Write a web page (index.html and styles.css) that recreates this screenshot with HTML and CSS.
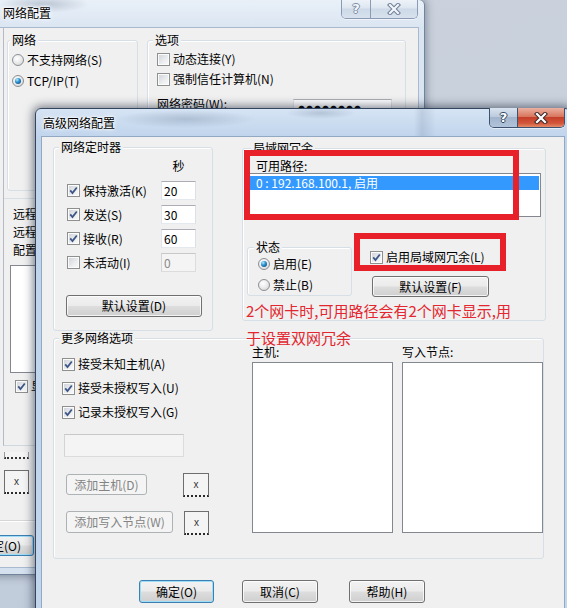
FILE: index.html
```html
<!DOCTYPE html>
<html lang="zh-CN">
<head>
<meta charset="utf-8">
<title>高级网络配置</title>
<link rel="stylesheet" href="styles.css">
</head>
<body>

<div class="window back">
  <div class="titlebar">
    <span class="title">网络配置</span>
    <div class="caps inactive">
      <span class="cap help">?</span>
      <span class="cap close"><svg viewBox="0 0 14 12" width="14" height="12"><path class="xo" d="M3 2 11 10M11 2 3 10"/><path class="xi" d="M3 2 11 10M11 2 3 10"/></svg></span>
    </div>
  </div>
  <div class="client">
    <div class="page">
      <div class="back-groups">
        <div class="group g-net">
          <div class="glabel">网络</div>
          <div class="opt r1"><span class="rb"></span>不支持网络(S)</div>
          <div class="opt r2"><span class="rb on"></span>TCP/IP(T)</div>
        </div>
        <div class="group g-opts">
          <div class="glabel">选项</div>
          <div class="opt o1"><span class="cb"></span>动态连接(Y)</div>
          <div class="opt o2"><span class="cb"></span>强制信任计算机(N)</div>
          <div class="pw-row"><span class="pw-label">网络密码(W):</span><span class="tb pw">●●●●●●●●</span></div>
        </div>
      </div>
      <div class="remote">
        <div class="remote-lines">
          <div>远程主机名称:</div>
          <div>远程节点地址:</div>
          <div>配置文件:</div>
        </div>
        <div class="list remote-list"></div>
        <div class="opt"><span class="cb on"><svg viewBox="0 0 9 9"><path d="M1.2 4.4 3.5 7 7.8 1.5"/></svg></span>显示全部</div>
      </div>
    </div>
    <div class="stub"></div>
    <div class="xbtn back-x">x</div>
    <div class="sep"></div>
    <div class="btn def back-ok">确定(O)</div>
  </div>
</div>

<div class="window front">
  <div class="titlebar">
    <span class="title">高级网络配置</span>
    <div class="caps">
      <span class="cap help">?</span>
      <span class="cap close"><svg viewBox="0 0 14 12" width="14" height="12"><path class="xo" d="M3 2 11 10M11 2 3 10"/><path class="xi" d="M3 2 11 10M11 2 3 10"/></svg></span>
    </div>
  </div>
  <div class="client">
    <div class="row1">
      <div class="group g-timer">
        <div class="glabel">网络定时器</div>
        <div class="timer-grid">
          <span></span><span class="sec">秒</span>
          <div class="opt"><span class="cb on"><svg viewBox="0 0 9 9"><path d="M1.2 4.4 3.5 7 7.8 1.5"/></svg></span>保持激活(K)</div><span class="tb">20</span>
          <div class="opt"><span class="cb on"><svg viewBox="0 0 9 9"><path d="M1.2 4.4 3.5 7 7.8 1.5"/></svg></span>发送(S)</div><span class="tb">30</span>
          <div class="opt"><span class="cb on"><svg viewBox="0 0 9 9"><path d="M1.2 4.4 3.5 7 7.8 1.5"/></svg></span>接收(R)</div><span class="tb">60</span>
          <div class="opt"><span class="cb"></span>未活动(I)</div><span class="tb dis">0</span>
        </div>
        <div class="btn btn-d">默认设置(D)</div>
      </div>
      <div class="group g-lan">
        <div class="glabel">局域网冗余</div>
        <div class="paths-label">可用路径:</div>
        <div class="list paths"><div class="item sel">0 : 192.168.100.1, 启用</div></div>
        <div class="lan-row">
          <div class="group g-state">
            <div class="glabel">状态</div>
            <div class="opt s1"><span class="rb on"></span>启用(E)</div>
            <div class="opt s2"><span class="rb"></span>禁止(B)</div>
          </div>
          <div class="lan-right">
            <div class="opt"><span class="cb on"><svg viewBox="0 0 9 9"><path d="M1.2 4.4 3.5 7 7.8 1.5"/></svg></span>启用局域网冗余(L)</div>
            <div class="btn btn-f">默认设置(F)</div>
          </div>
        </div>
      </div>
    </div>

    <div class="group g-more">
      <div class="glabel">更多网络选项</div>
      <div class="more-body">
        <div class="more-left">
          <div class="opt m1"><span class="cb on"><svg viewBox="0 0 9 9"><path d="M1.2 4.4 3.5 7 7.8 1.5"/></svg></span>接受未知主机(A)</div>
          <div class="opt"><span class="cb on"><svg viewBox="0 0 9 9"><path d="M1.2 4.4 3.5 7 7.8 1.5"/></svg></span>接受未授权写入(U)</div>
          <div class="opt"><span class="cb on"><svg viewBox="0 0 9 9"><path d="M1.2 4.4 3.5 7 7.8 1.5"/></svg></span>记录未授权写入(G)</div>
          <div class="tb dis wide"></div>
          <div class="brow brow1">
            <div class="btn dis btn-host">添加主机(D)</div>
            <div class="xbtn x1">x</div>
          </div>
          <div class="brow brow2">
            <div class="btn dis btn-node">添加写入节点(W)</div>
            <div class="xbtn x2">x</div>
          </div>
        </div>
        <div class="more-col">
          <div>主机:</div>
          <div class="list hosts"></div>
        </div>
        <div class="more-col col2">
          <div>写入节点:</div>
          <div class="list hosts"></div>
        </div>
      </div>
    </div>

    <div class="dlg-btns">
      <div class="btn def btn-ok">确定(O)</div>
      <div class="btn btn-cancel">取消(C)</div>
      <div class="btn btn-help">帮助(H)</div>
    </div>
  </div>
</div>

<div class="mark mark-paths"></div>
<div class="mark mark-redund"></div>
<p class="note">2个网卡时,可用路径会有2个网卡显示,用<br>于设置双网冗余</p>

</body>
</html>
```

FILE: styles.css
```css
* { box-sizing: border-box; }
html, body { margin: 0; padding: 0; }
body {
  width: 567px;
  height: 608px;
  overflow: hidden;
  position: relative;
  background: linear-gradient(170deg, #cbd2dd 0%, #c6cfdb 60%, #bfcbdb 100%);
  font-family: "Noto Sans CJK SC", "Noto Sans", sans-serif;
  font-size: 12px;
  line-height: 14px;
  color: #000;
}

/* ---------- windows ---------- */
.window {
  position: absolute;
  display: flex;
  flex-direction: column;
  border: 1px solid #4a5c76;
  border-radius: 6px 6px 0 0;
}
.back {
  left: -67px;
  top: -1px;
  width: 492px;
  height: 576px;
  border-color: #72839c;
  background:
    radial-gradient(ellipse 45px 9px at 110px 4px, rgba(70, 90, 120, .28), transparent),
    linear-gradient(180deg, #e9f0f8 0, #dae5f2 28px, #d5e1ef 100%);
  box-shadow: 0 0 8px 1px rgba(40, 50, 70, .45);
}
.front {
  left: 35px;
  top: 108px;
  width: 536px;
  height: 520px;
  border-color: #34465f;
  background:
    radial-gradient(ellipse 70px 9px at 150px 10px, rgba(60, 80, 110, .22), transparent),
    radial-gradient(ellipse 35px 6px at 285px 4px, rgba(60, 80, 110, .2), transparent),
    linear-gradient(90deg, transparent 378px, rgba(90, 110, 140, .18) 386px, transparent 400px),
    linear-gradient(180deg, #d6e4f4 0, #c0d4ec 28px, #c1d5ec 100%);
  box-shadow: 0 0 10px 2px rgba(20, 30, 50, .55);
}
.titlebar {
  height: 28px;
  flex: none;
  display: flex;
  align-items: flex-start;
}
.title {
  line-height: 14px;
  white-space: nowrap;
  text-shadow: 0 0 6px #fff, 0 0 3px #fff, 0 0 2px #fff;
}
.back .title { padding: 6px 0 0 69px; }
.front .title { padding: 7px 0 0 7px; }

.caps {
  margin-left: auto;
  margin-top: -1px;
  display: flex;
  height: 20px;
  border: 1px solid #3f5170;
  border-top: none;
  border-radius: 0 0 5px 5px;
  overflow: hidden;
  box-shadow: 0 1px 0 rgba(255, 255, 255, .5);
}
.back .caps { margin-right: 6px; border-color: #8a9bb3; }
.front .caps { margin-right: 5px; }
.cap {
  height: 100%;
  display: flex;
  align-items: center;
  justify-content: center;
}
.cap.help {
  width: 28px;
  border-right: 1px solid #3f5170;
  font: bold 13px/1 "DejaVu Sans", sans-serif;
  color: #fff;
  text-shadow: 1px 0 0 #34455f, -1px 0 0 #34455f, 0 1px 0 #34455f, 0 -1px 0 #34455f;
  background: linear-gradient(180deg, #d9e3f0 0%, #bccbde 45%, #a2b5cd 50%, #b1c3d9 100%);
}
.cap.close {
  width: 46px;
  background: linear-gradient(180deg, #eab0a1 0%, #d9775f 45%, #c5402a 50%, #d2553a 80%, #e48c68 100%);
}
.cap svg { display: block; }
.xo { stroke: #3a2a2a; stroke-width: 4.2; fill: none; stroke-linecap: square; }
.xi { stroke: #fff; stroke-width: 2.2; fill: none; stroke-linecap: square; }

.caps.inactive .cap.help {
  border-right-color: #8a9bb3;
  color: #f3f6fa;
  text-shadow: 1px 0 0 #7c8da6, -1px 0 0 #7c8da6, 0 1px 0 #7c8da6, 0 -1px 0 #7c8da6;
  background: linear-gradient(180deg, #f0f4f9 0%, #dde6f0 48%, #cdd9e7 52%, #d8e2ee 100%);
  width: 29px;
}
.caps.inactive .cap.close {
  background: linear-gradient(180deg, #f0f4f9 0%, #dde6f0 48%, #cdd9e7 52%, #d8e2ee 100%);
}
.caps.inactive .xo { stroke: #6f7f97; }
.caps.inactive .xi { stroke: #f3f6fa; }

.client {
  flex: 1;
  background: #f0f0f0;
  box-shadow: 0 0 0 1px #93a8c2;
}
.back .client { margin: 0 6px 7px; box-shadow: 0 0 0 1px #a9bad0; }
.front .client { margin: 0 6px; padding: 10px 0 0 11px; }

/* ---------- common controls ---------- */
.group {
  border: 1px solid #d5dfe5;
  border-radius: 3px;
  box-shadow: inset 1px 1px 0 #fff;
}
.glabel {
  width: fit-content;
  margin-top: -8px;
  padding: 0 2px;
  background: #f0f0f0;
  line-height: 14px;
  white-space: nowrap;
}
.opt {
  display: flex;
  align-items: center;
  gap: 3px;
  height: 14px;
  line-height: 14px;
  white-space: nowrap;
}
.cb {
  flex: none;
  width: 13px;
  height: 13px;
  display: inline-grid;
  place-items: center;
  border: 1px solid #8e8f8f;
  background: linear-gradient(135deg, #cdd1d7 0%, #eceef0 60%, #fafafa 100%);
  box-shadow: inset 0 0 0 1px #fbfbfb;
}
.cb svg {
  width: 9px;
  height: 9px;
  fill: none;
  stroke: #3d5687;
  stroke-width: 1.8;
}
.rb {
  flex: none;
  width: 12px;
  height: 12px;
  border-radius: 50%;
  display: inline-grid;
  place-items: center;
  border: 1px solid #8b8f94;
  background: radial-gradient(circle at 40% 35%, #ffffff 0%, #e8e8e8 55%, #c9cbce 100%);
}
.rb.on::after {
  content: "";
  width: 6px;
  height: 6px;
  border-radius: 50%;
  background: radial-gradient(circle at 35% 30%, #b7ecff 0%, #2d95d4 40%, #124d80 85%);
}
.tb {
  display: flex;
  align-items: center;
  padding-left: 2px;
  background: #fff;
  border: 1px solid;
  border-color: #abadb3 #dbdfe6 #e3e9ef #e2e3ea;
  line-height: 14px;
}
.tb.dis {
  background: #f4f4f4;
  border-color: #c8c8c8 #dcdcdc #dcdcdc #d4d4d4;
  color: #8a8a8a;
}
.list {
  background: #fff;
  border: 1px solid #828790;
}
.btn {
  display: flex;
  align-items: center;
  justify-content: center;
  border: 1px solid #707070;
  border-radius: 3px;
  background: linear-gradient(180deg, #f2f2f2 0%, #ebebeb 48%, #dddddd 52%, #cfcfcf 100%);
  box-shadow: inset 0 0 0 1px rgba(255, 255, 255, .75);
  white-space: nowrap;
  line-height: 14px;
}
.btn.def {
  border-color: #3c7fb1;
  box-shadow: inset 0 0 0 1px #9fdcf8;
}
.btn.dis {
  border-color: #adb2b5;
  background: #f4f4f4;
  box-shadow: none;
  color: #838383;
}
.xbtn {
  display: flex;
  align-items: center;
  justify-content: center;
  background: #f4f4f4;
  border: 1px solid #6e6e6e;
  border-bottom: 2px dotted #2a2a2a;
  font: 10px/1 "Liberation Sans", sans-serif;
  color: #333;
}

/* ---------- back window content ---------- */
.page {
  margin-left: 63px;
  width: 415px;
  height: 418px;
  border-left: 1px solid #b3bbc6;
  border-bottom: 1px solid #d0d8df;
}
.back-groups { display: flex; padding-top: 12px; }
.g-net { margin-left: 3px; width: 131px; height: 151px; }
.g-net .glabel { margin-left: 2px; }
.g-net .opt { padding-left: 4px; }
.r1 { margin-top: 6px; }
.r2 { margin-top: 7px; }
.g-opts { margin-left: 9px; width: 259px; height: 151px; }
.g-opts .glabel { margin-left: 5px; }
.g-opts .opt { padding-left: 9px; }
.o1 { margin-top: 5px; }
.o2 { margin-top: 6px; }
.pw-row { display: flex; align-items: flex-start; margin-top: 11px; padding-left: 9px; }
.pw-label { flex: none; width: 136px; white-space: nowrap; }
.tb.pw {
  margin-top: 2px;
  width: 99px;
  height: 20px;
  font-size: 7px;
  letter-spacing: 1px;
  padding-left: 4px;
  align-items: flex-end;
  padding-bottom: 3px;
}
.remote { margin-top: 7px; border-top: 1px solid #d5dfe5; padding-top: 6px; }
.remote-lines { padding-left: 9px; line-height: 18px; white-space: nowrap; }
.remote-list { margin: 6px 0 0 6px; width: 300px; height: 108px; }
.remote .opt { margin-top: 6px; padding-left: 11px; }
.stub {
  margin: 6px 0 0 64px;
  width: 25px;
  height: 7px;
  border: 1px solid #9a9a9a;
  border-top: none;
  border-bottom: 2px dotted #333;
  background: #f4f4f4;
}
.back-x { margin: 11px 0 0 64px; width: 25px; height: 24px; }
.sep { margin-top: 26px; height: 2px; border-top: 1px solid #d6d6d6; border-bottom: 1px solid #fff; }
.back-ok {
  margin: 13px 0 0 17px;
  width: 77px;
  height: 21px;
  justify-content: flex-end;
  padding-right: 12px;
}

/* ---------- front window content ---------- */
.row1 { display: flex; align-items: flex-start; }
.g-timer { width: 160px; height: 184px; }
.g-timer .glabel { margin-left: 5px; }
.timer-grid {
  display: grid;
  grid-template-columns: 94px 35px;
  grid-template-rows: 17px repeat(4, 19px);
  row-gap: 5px;
  align-items: center;
  margin: 5px 0 0 13px;
}
.sec { align-self: start; text-align: center; }
.timer-grid .tb { height: 19px; width: 35px; }
.btn-d { margin: 23px 0 0 12px; width: 136px; height: 22px; }

.g-lan { margin-left: 29px; margin-top: 1px; width: 304px; height: 173px; }
.g-lan > .glabel { margin-left: 8px; }
.paths-label { margin-top: 4px; padding-left: 13px; }
.paths { margin: 0 4px; height: 44px; padding-top: 2px; }
.item.sel {
  margin-right: 1px;
  height: 14px;
  line-height: 14px;
  padding-left: 8px;
  background: #3399ff;
  color: #fff;
  white-space: nowrap;
}
.lan-row { display: flex; align-items: flex-start; margin-top: 30px; padding-left: 4px; }
.g-state { flex: none; width: 105px; height: 49px; }
.g-state .glabel { margin-left: 6px; }
.g-state .opt { padding-left: 10px; }
.s1 { margin-top: 3px; }
.s2 { margin-top: 7px; }
.lan-right { margin-left: 18px; }
.lan-right .opt { margin-top: 3px; }
.btn-f { margin: 12px 0 0 2px; width: 117px; height: 21px; }

.g-more { margin-top: 7px; width: 491px; height: 221px; }
.g-more > .glabel { margin-left: 5px; }
.more-body { display: flex; }
.more-left { flex: none; width: 198px; }
.more-left .opt { padding-left: 8px; margin-top: 10px; }
.more-left .opt.m1 { margin-top: 12px; }
.tb.wide { margin: 15px 0 0 10px; width: 120px; height: 23px; }
.brow {
  display: flex;
  justify-content: space-between;
  align-items: flex-start;
  margin-left: 12px;
  width: 143px;
}
.brow1 { margin-top: 16px; }
.brow2 { margin-top: 14px; }
.btn-host { margin-top: 1px; width: 81px; height: 21px; }
.btn-node { width: 107px; height: 22px; }
.x1 { width: 26px; height: 24px; }
.x2 { width: 25px; height: 24px; }
.more-col { flex: none; width: 141px; white-space: nowrap; }
.more-col.col2 { margin-left: 9px; }
.hosts { margin-top: 3px; height: 171px; }

.dlg-btns { display: flex; margin-top: 21px; }
.btn-ok { margin-left: 86px; width: 75px; height: 23px; }
.btn-cancel { margin-left: 28px; width: 76px; height: 23px; }
.btn-help { margin-left: 31px; width: 76px; height: 23px; }

/* ---------- red annotations (overlay) ---------- */
.mark {
  position: absolute;
  border: 6px solid #e8202a;
}
.mark-paths { left: 244px; top: 150px; width: 275px; height: 70px; }
.mark-redund { left: 354px; top: 233px; width: 152px; height: 38px; }
.note {
  position: absolute;
  left: 246px;
  top: 297px;
  margin: 0;
  font-size: 15px;
  line-height: 27px;
  color: #e3262f;
  white-space: nowrap;
}
```
